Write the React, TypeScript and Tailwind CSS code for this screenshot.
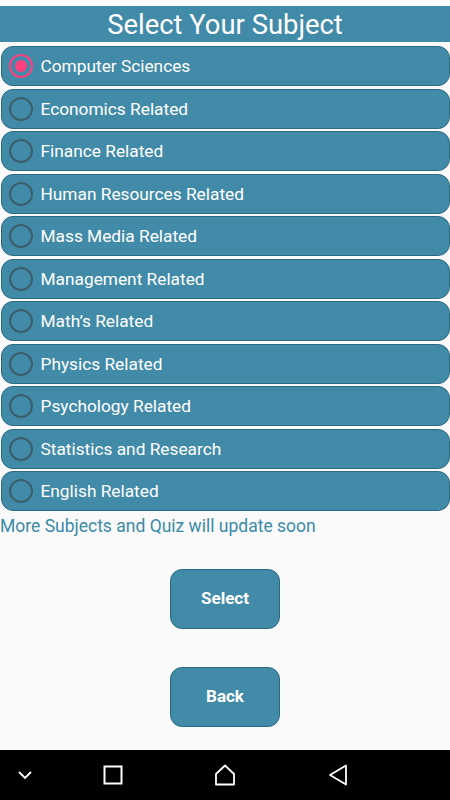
import React, { useState } from 'react';

const subjects = [
  'Computer Sciences',
  'Economics Related',
  'Finance Related',
  'Human Resources Related',
  'Mass Media Related',
  'Management Related',
  'Math’s Related',
  'Physics Related',
  'Psychology Related',
  'Statistics and Research',
  'English Related',
];

export default function App() {
  const [selected, setSelected] = useState(0);

  return (
    <div className="w-[450px] h-[800px] bg-[#fafafa] flex flex-col overflow-hidden" style={{ fontFamily: 'Roboto, "Noto Sans", sans-serif' }}>
      <div className="mt-[6px] h-[36px] bg-[#428ba8] flex items-center justify-center pt-[3px]">
        <h1 className="text-white text-[27.4px] leading-none">Select Your Subject</h1>
      </div>

      <div className="mt-[4px] flex flex-col gap-[2.5px]">
        {subjects.map((s, i) => (
          <button
            key={s}
            onClick={() => setSelected(i)}
            className="h-[40px] mx-[0.5px] rounded-[12px] bg-[#428ba8] border-[1.5px] border-[#2c6a82] flex items-center pl-[7px] text-left"
          >
            <span
              className={`w-[24px] h-[24px] rounded-full border-[2.5px] flex items-center justify-center shrink-0 ${
                selected === i ? 'border-[#ff4081]' : 'border-[#3b5e6c]'
              }`}
            >
              {selected === i && <span className="w-[12px] h-[12px] rounded-full bg-[#ff4081]" />}
            </span>
            <span className="ml-[8px] pt-[2px] text-white text-[17.3px]">{s}</span>
          </button>
        ))}
      </div>

      <p className="mt-[5px] text-[#3a8aa8] text-[17.5px] leading-[20px]">More Subjects and Quiz will update soon</p>

      <div className="flex flex-col items-center">
        <button className="mt-[33px] w-[110px] h-[60px] rounded-[12px] bg-[#428ba8] border-[1.5px] border-[#2c6a82] text-white text-[17px] font-bold">
          Select
        </button>
        <button className="mt-[38px] w-[110px] h-[60px] rounded-[12px] bg-[#428ba8] border-[1.5px] border-[#2c6a82] text-white text-[17px] font-bold">
          Back
        </button>
      </div>

      <div className="mt-auto h-[50px] bg-black flex items-center">
        <div className="w-[50px] flex justify-center">
          <svg width="16" height="10" viewBox="0 0 16 10" fill="none" stroke="white" strokeWidth="1.8">
            <path d="M2 2l6 6 6-6" />
          </svg>
        </div>
        <div className="w-[125px] flex justify-center">
          <svg width="20" height="20" viewBox="0 0 20 20" fill="none" stroke="white" strokeWidth="2">
            <rect x="1.5" y="1.5" width="17" height="17" />
          </svg>
        </div>
        <div className="w-[100px] flex justify-center">
          <svg width="22" height="22" viewBox="0 0 22 22" fill="none" stroke="white" strokeWidth="1.8" strokeLinejoin="round">
            <path d="M2 10L11 1.5L20 10V20.5H2Z" />
          </svg>
        </div>
        <div className="w-[125px] flex justify-center">
          <svg width="20" height="22" viewBox="0 0 20 22" fill="none" stroke="white" strokeWidth="1.8" strokeLinejoin="round">
            <path d="M18 1.5V20.5L2 11Z" />
          </svg>
        </div>
      </div>
    </div>
  );
}
